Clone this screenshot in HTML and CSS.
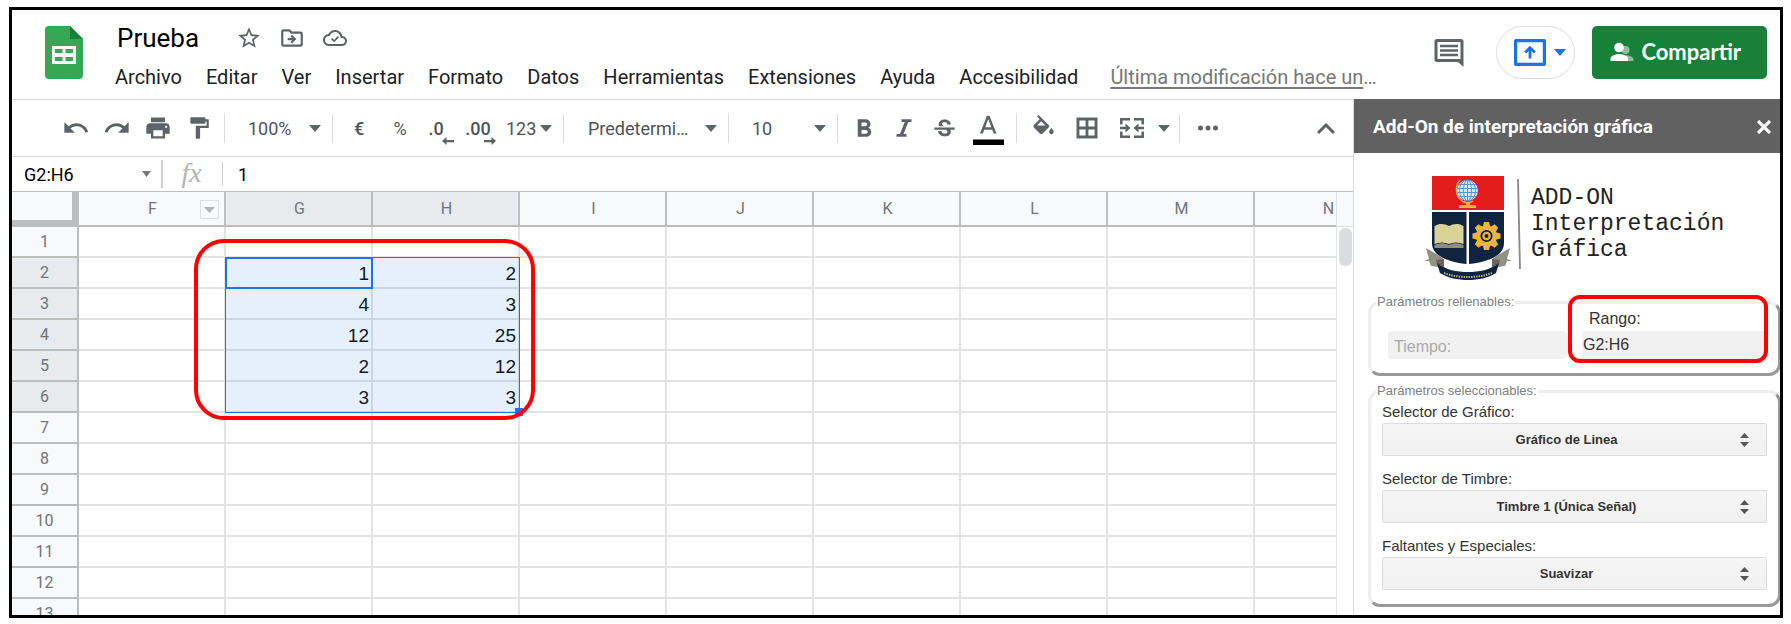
FILE: index.html
```html
<!DOCTYPE html>
<html lang="es">
<head>
<meta charset="utf-8">
<title>Prueba</title>
<link rel="stylesheet" href="styles.css">
</head>
<body>
<div class="frame">
  <header class="header">
    <svg class="logo" width="38" height="53" viewBox="0 0 38 53" aria-hidden="true">
      <path fill="#34a853" d="M4 0h21l13 13v36a4 4 0 0 1-4 4H4a4 4 0 0 1-4-4V4a4 4 0 0 1 4-4z"/>
      <path fill="#188038" d="M25 0l13 13H25z"/>
      <path fill="#fff" fill-rule="evenodd" d="M7 20h24v18H7zM10 23v4h7.500v-4zM20.500 23v4H28v-4zM10 31v4h7.500v-4zM20.500 31v4H28v-4z"/>
    </svg>
    <div class="heading">
      <div class="title-row">
        <h1 class="title">Prueba</h1>
        <button class="title-btn" aria-label="Destacar"><svg width="26" height="26" viewBox="0 0 24 24"><path d="M22 9.24l-7.19-.62L12 2 9.19 8.63 2 9.24l5.46 4.73L5.82 21 12 17.27 18.18 21l-1.63-7.03L22 9.24zM12 15.4l-3.76 2.27 1-4.28-3.32-2.88 4.38-.38L12 6.1l1.710 4.040 4.380.380-3.320 2.880 1 4.280L12 15.400z"/></svg></button>
        <button class="title-btn" aria-label="Mover"><svg width="26" height="26" viewBox="0 0 24 24"><path d="M20 6h-8l-2-2H4c-1.100 0-2 .9-2 2v12c0 1.100.9 2 2 2h16c1.100 0 2-.9 2-2V8c0-1.100-.9-2-2-2zm0 12H4V6h5.170l2 2H20v10z"/><path d="M12.160 12H8v2h4.160l-1.590 1.590L11.990 17 16 13.010 11.990 9l-1.410 1.410z"/></svg></button>
        <button class="title-btn" aria-label="Estado del documento"><svg width="24" height="24" viewBox="0 0 24 24"><path d="M19.35 10.04C18.67 6.59 15.64 4 12 4 9.11 4 6.61 5.64 5.36 8.04 2.34 8.36 0 10.91 0 14c0 3.31 2.69 6 6 6h13c2.76 0 5-2.24 5-5 0-2.64-2.05-4.78-4.65-4.96zM19 18H6c-2.21 0-4-1.79-4-4 0-2.05 1.53-3.76 3.56-3.97l1.07-.11.5-.95C8.08 7.14 9.94 6 12 6c2.62 0 4.88 1.86 5.39 4.43l.3 1.5 1.53.11c1.56.1 2.78 1.41 2.78 2.960 0 1.650-1.350 3-3 3z"/><path d="M8.600 12.600l2.500 2.500 4.400-4.400" fill="none" stroke="#5f6368" stroke-width="1.700"/></svg></button>
      </div>
      <nav class="menu">
        <button>Archivo</button><button>Editar</button><button>Ver</button><button>Insertar</button><button>Formato</button><button>Datos</button><button>Herramientas</button><button>Extensiones</button><button>Ayuda</button><button>Accesibilidad</button>
        <span class="modified"><a href="#">Última modificación hace un</a>…</span>
      </nav>
    </div>
    <div class="actions">
      <button class="comment" aria-label="Comentarios"><svg width="30" height="30" viewBox="0 0 30 30"><path fill="#5f6368" fill-rule="evenodd" d="M3 1h24a2.500 2.500 0 0 1 2.500 2.500V29l-5.500-5H3a2.500 2.500 0 0 1-2.500-2.500v-18A2.500 2.500 0 0 1 3 1zm.5 3v17h23V4z"/><path stroke="#5f6368" stroke-width="2.400" d="M6 8h18M6 12.500h18M6 17h18"/></svg></button>
      <button class="present" aria-label="Presentar"><svg width="32" height="27" viewBox="0 0 32 27"><rect x="1.500" y="1.500" width="29" height="24" rx="1.500" fill="none" stroke="#1a73e8" stroke-width="3.400"/><path d="M16 19.500V9.500M11.200 13.500L16 8.700l4.800 4.800" fill="none" stroke="#1a73e8" stroke-width="2.800"/></svg><svg width="12" height="7" viewBox="0 0 12 7"><path fill="#1a73e8" d="M0 0h12L6 7z"/></svg></button>
      <button class="share"><svg width="24" height="20" viewBox="0 0 24 20"><g fill="#8cc09c"><circle cx="15.500" cy="8" r="4"/><path d="M16 13c3 .5 7.500 1.800 7.500 4.500V19H17z"/></g><g fill="#fff"><circle cx="9" cy="5.500" r="4.800"/><path d="M.5 19v-2.500C.5 13.500 6 12 9.200 12S18 13.500 18 16.500V19z"/></g></svg>Compartir</button>
    </div>
  </header>

  <div class="workspace">
    <main class="sheet">
      <div class="toolbar">
        <button class="tool" aria-label="Deshacer"><svg width="28" height="28" viewBox="0 0 24 24"><path d="M12.5 8c-2.65 0-5.05.99-6.9 2.6L2 7v9h9l-3.62-3.62c1.39-1.16 3.16-1.88 5.12-1.88 3.54 0 6.55 2.31 7.6 5.5l2.37-.78C21.08 11.03 17.15 8 12.5 8z"/></svg></button>
        <button class="tool" aria-label="Rehacer"><svg width="28" height="28" viewBox="0 0 24 24"><path d="M18.4 10.6C16.55 8.99 14.15 8 11.5 8c-4.65 0-8.58 3.03-9.96 7.22L3.9 16c1.05-3.19 4.05-5.5 7.6-5.5 1.95 0 3.73.72 5.12 1.88L13 16h9V7l-3.6 3.6z"/></svg></button>
        <button class="tool" aria-label="Imprimir"><svg width="28" height="28" viewBox="0 0 24 24"><path d="M19 8H5c-1.66 0-3 1.34-3 3v6h4v4h12v-4h4v-6c0-1.66-1.34-3-3-3zm-3 11H8v-5h8v5zm3-7c-.55 0-1-.45-1-1s.45-1 1-1 1 .45 1 1-.45 1-1 1zm-1-9H6v4h12V3z"/></svg></button>
        <button class="tool" aria-label="Copiar formato"><svg width="26" height="26" viewBox="0 0 24 24"><path d="M18 4V3c0-.55-.45-1-1-1H5c-.55 0-1 .45-1 1v4c0 .55.45 1 1 1h12c.55 0 1-.45 1-1V6h1v4H9v11c0 .55.45 1 1 1h2c.55 0 1-.45 1-1v-9h8V4h-3z"/></svg></button>
        <span class="sep"></span>
        <span class="drop drop-zoom"><select aria-label="Zoom"><option>100%</option></select><svg class="caret" width="12" height="7" viewBox="0 0 12 7"><path d="M0 0h12L6 7z"/></svg></span>
        <span class="sep"></span>
        <button class="tool text euro">€</button>
        <button class="tool text percent">%</button>
        <button class="tool text decimal dec-less" aria-label="Menos decimales">.0<svg width="12" height="8" viewBox="0 0 12 8"><path d="M0 4l4.500-4v3H12v2.200H4.500V8z"/></svg></button>
        <button class="tool text decimal dec-more" aria-label="Más decimales">.00<svg width="12" height="8" viewBox="0 0 12 8"><path d="M12 4L7.500 0v3H0v2.200h7.500V8z"/></svg></button>
        <span class="drop drop-format"><select aria-label="Formato de número"><option>123</option></select><svg class="caret" width="12" height="7" viewBox="0 0 12 7"><path d="M0 0h12L6 7z"/></svg></span>
        <span class="sep"></span>
        <span class="drop drop-font"><select aria-label="Fuente"><option>Predetermi…</option></select><svg class="caret" width="12" height="7" viewBox="0 0 12 7"><path d="M0 0h12L6 7z"/></svg></span>
        <span class="sep"></span>
        <span class="drop drop-size"><select aria-label="Tamaño"><option>10</option></select><svg class="caret" width="12" height="7" viewBox="0 0 12 7"><path d="M0 0h12L6 7z"/></svg></span>
        <span class="sep"></span>
        <button class="tool" aria-label="Negrita"><svg width="30" height="30" viewBox="0 -1 24 24"><path d="M15.6 10.79c.97-.67 1.65-1.77 1.65-2.79 0-2.26-1.75-4-4-4H7v14h7.04c2.09 0 3.71-1.7 3.71-3.79 0-1.52-.86-2.82-2.15-3.42zM10 6.5h3c.83 0 1.5.67 1.5 1.5s-.67 1.5-1.5 1.5h-3v-3zm3.5 9H10v-3h3.5c.83 0 1.5.67 1.5 1.5s-.67 1.5-1.5 1.5z"/></svg></button>
        <button class="tool narrow" aria-label="Cursiva"><svg width="30" height="30" viewBox="0 -1 24 24"><path d="M10 4v2.200h2.600L8.700 15.800H6V18h8v-2.200h-2.400l3.900-9.600H18V4z"/></svg></button>
        <button class="tool" aria-label="Tachado"><svg width="27" height="27" viewBox="0 -1 24 24"><path d="M7.24 8.75c-.26-.48-.39-1.03-.39-1.67 0-.61.13-1.16.4-1.67.26-.5.63-.93 1.11-1.29.48-.35 1.05-.63 1.7-.83.66-.19 1.39-.29 2.18-.29.81 0 1.54.11 2.21.34.66.22 1.23.54 1.69.94.47.4.83.88 1.08 1.43s.38 1.15.38 1.81h-3.01c0-.31-.05-.59-.15-.85-.09-.27-.24-.49-.44-.68-.2-.19-.45-.33-.75-.44-.3-.1-.66-.16-1.06-.16-.39 0-.74.04-1.03.13s-.53.21-.72.36c-.19.16-.34.34-.44.55-.1.21-.15.43-.15.66 0 .48.25.88.74 1.21.38.25.77.48 1.41.7H7.39c-.05-.08-.11-.17-.15-.25zM21 12v-2H3v2h9.62c.18.07.4.14.55.2.37.17.66.34.87.51s.35.36.43.57c.07.2.11.43.11.69 0 .23-.05.45-.14.66-.09.2-.23.38-.42.53-.19.15-.42.26-.71.35-.29.08-.63.13-1.01.13-.43 0-.83-.04-1.18-.13s-.66-.23-.91-.42c-.25-.19-.45-.44-.59-.75s-.25-.76-.25-1.21H6.4c0 .55.08 1.13.24 1.58s.37.85.65 1.21c.28.35.6.66.98.92.37.26.78.48 1.22.65.44.17.9.3 1.38.39.48.08.96.13 1.44.13.8 0 1.53-.09 2.18-.28s1.21-.45 1.67-.79c.46-.34.82-.77 1.07-1.27s.38-1.07.38-1.71c0-.6-.1-1.14-.31-1.61-.05-.11-.11-.23-.17-.33H21z"/></svg></button>
        <button class="tool wide" aria-label="Color del texto"><svg width="31" height="34" viewBox="0 0 31 34"><path transform="translate(0 1) scale(1.270)" d="M11 3L5.500 17h2.250l1.120-3h6.250l1.120 3h2.250L13 3h-2zm-1.380 9L12 5.670 14.380 12H9.620z"/><path fill="#000" d="M0 28.500h31v5.500H0z"/></svg></button>
        <span class="sep"></span>
        <button class="tool" aria-label="Color de relleno"><svg width="27" height="27" viewBox="0 0 24 24"><path d="M16.56 8.94L7.62 0 6.21 1.41l2.38 2.38-5.15 5.15c-.59.59-.59 1.54 0 2.12l5.5 5.5c.29.29.68.44 1.06.44s.77-.15 1.06-.44l5.5-5.5c.59-.58.59-1.53 0-2.12z"/><path fill="#fff" d="M6.200 9.300L10 5.500l3.800 3.800z"/><path d="M19 11.500s-2 2.170-2 3.500c0 1.100.9 2 2 2s2-.9 2-2c0-1.330-2-3.500-2-3.500z"/></svg></button>
        <button class="tool wide" aria-label="Bordes"><svg width="28" height="28" viewBox="0 0 24 24"><path fill-rule="evenodd" d="M3 3v18h18V3H3zm7.800 15.500H5.500v-5.300h5.300zM10.800 10.800H5.500V5.500h5.300zM18.500 18.500h-5.300v-5.300h5.300zM18.500 10.800h-5.300V5.500h5.300z"/></svg></button>
        <button class="tool merge" aria-label="Combinar celdas"><svg width="24" height="22" viewBox="0 0 24 22"><path fill="none" stroke="#5f6368" stroke-width="2.500" d="M10 2.200H1.300V7.500M14 2.200h8.700V7.500M10 19.800H1.300V14.500M14 19.800h8.700V14.500M0 11h7M24 11h-7"/><path d="M5.500 6.500L10.500 11l-5 4.500zM18.500 6.500L13.500 11l5 4.500z"/></svg></button>
        <button class="tool slim" aria-label="Tipo de combinación"><svg width="12" height="7" viewBox="0 0 12 7"><path d="M0 0h12L6 7z"/></svg></button>
        <span class="sep"></span>
        <button class="tool more" aria-label="Más"><svg width="20" height="6" viewBox="0 0 20 6"><circle cx="2.500" cy="3" r="2.500"/><circle cx="10" cy="3" r="2.500"/><circle cx="17.500" cy="3" r="2.500"/></svg></button>
        <button class="tool collapse" aria-label="Ocultar los menús"><svg width="18" height="11" viewBox="0 0 18 11"><path fill="none" stroke="#5f6368" stroke-width="3" d="M1 10l8-8 8 8"/></svg></button>
      </div>

      <div class="formula-bar">
        <input class="name-box" aria-label="Cuadro de nombres" value="G2:H6">
        <svg width="9" height="6" viewBox="0 0 9 6"><path fill="#777" d="M0 0h9L4.500 6z"/></svg>
        <span class="bar-sep tall"></span>
        <label class="fx" for="formula">fx</label>
        <span class="bar-sep"></span>
        <input class="formula" id="formula" value="1">
      </div>

      <div class="grid-area">
        <div class="grid-view">
          <table class="grid" id="grid">
            <thead><tr>
              <th class="corner"></th>
              <th>F<button class="col-menu" aria-label="Menú de la columna F"><svg width="11" height="6" viewBox="0 0 11 6"><path fill="#b4b4b4" d="M0 0h11L5.500 6z"/></svg></button></th>
              <th class="on">G</th><th class="on">H</th><th>I</th><th>J</th><th>K</th><th>L</th><th>M</th><th>N</th>
            </tr></thead>
            <tbody></tbody>
          </table>
          <div class="selection"><span class="active-cell"></span><span class="handle"></span></div>
          <div class="mark mark-cells"></div>
        </div>
        <div class="scroll"><div class="scroll-head"></div><div class="thumb"></div></div>
      </div>
    </main>

    <aside class="addon">
      <div class="addon-head">
        <h2>Add-On de interpretación gráfica</h2>
        <button aria-label="Cerrar"><svg width="14" height="14" viewBox="0 0 14 14"><path stroke="#fff" stroke-width="3.200" d="M1 1l12 12M13 1L1 13"/></svg></button>
      </div>
      <div class="brand">
        <svg class="shield" width="88" height="106" viewBox="0 0 88 106" aria-hidden="true">
          <path fill="#e21d1b" d="M8 1h72v34H8z"/>
          <circle cx="43.500" cy="15.500" r="10.500" fill="#d9e8f7"/>
          <g fill="none" stroke="#5d93cf" stroke-width="1"><path d="M35 9.500h17M33 13.500h21M33 17.500h21M35 21.500h17M43.500 5v21"/><ellipse cx="43.500" cy="15.500" rx="4" ry="10.500"/><ellipse cx="43.500" cy="15.500" rx="8" ry="10.500"/></g>
          <path fill="none" stroke="#edb33c" stroke-width="1.500" d="M36 5c-5 5-5 16 2 21 4 2.500 8 2 11 0"/>
          <path fill="#edb33c" d="M42 27h4v3h6v3H35v-3h7z"/>
          <path fill="#10233f" d="M8 37h34.500v52C24 87 8 81 8 68zM45 37h35v31c0 13-16 19-35 21z"/>
          <path fill="#d9d398" d="M10.500 51c5-3 10-2.500 14.500 0 4.500-2.500 10-3 14.500 0v18c-5-2-10-2-14.500 0-4.500-2-9.500-2-14.500 0z"/>
          <path fill="#928a83" d="M10.500 70c5-2.500 10-2.500 14.500 0 4.500-2.500 9.500-2.500 14.500 0v3h-29z"/>
          <g transform="translate(62.500 61)"><g fill="#edb33c"><circle r="10.500"/><path id="tooth" d="M-2.500-14h5L4-8h-8z"/><use href="#tooth" transform="rotate(45)"/><use href="#tooth" transform="rotate(90)"/><use href="#tooth" transform="rotate(135)"/><use href="#tooth" transform="rotate(180)"/><use href="#tooth" transform="rotate(225)"/><use href="#tooth" transform="rotate(270)"/><use href="#tooth" transform="rotate(315)"/></g><circle r="5.200" fill="none" stroke="#10233f" stroke-width="1.800"/><circle r="2" fill="#10233f"/></g>
          <path fill="#8f9182" d="M2 73l17 10v15l-5-6-7-1-2-5H0l5-2zM86 73l-17 10v15l5-6 7-1 2-5h5l-5-2z"/>
          <path fill="#72605b" d="M12 85l8-1v8l-7-3zM76 85l-8-1v8l7-3z"/>
          <path fill="#10233f" d="M13 88c9 7 20 9 31 9s22-2 31-9l-3 10c-8 5-18 7-28 7s-20-2-28-7z"/>
          <path fill="none" stroke="#b4b389" stroke-width="2" stroke-dasharray="1.500 1" d="M20 98c8 3 16 4 24 4s16-1 24-4"/>
        </svg>
        <svg class="rule" width="4" height="90" viewBox="0 0 4 90" aria-hidden="true"><path stroke="#888" stroke-width="1.800" d="M1 0l2 90"/></svg>
        <p>ADD-ON<br>Interpretación<br>Gráfica</p>
      </div>

      <fieldset class="group fill">
        <legend>Parámetros rellenables:</legend>
        <input class="field" aria-label="Tiempo" placeholder="Tiempo:">
        <div class="range"><label for="range">Rango:</label><input class="field" id="range" value="G2:H6"></div>
        <div class="mark mark-range"></div>
      </fieldset>

      <fieldset class="group choose">
        <legend>Parámetros seleccionables:</legend>
        <label for="chart">Selector de Gráfico:</label>
        <span class="picker"><select id="chart"><option>Gráfico de Linea</option></select><svg width="9" height="14" viewBox="0 0 9 14"><path d="M4.500 0L9 5H0zM0 9h9l-4.500 5z"/></svg></span>
        <label for="tone">Selector de Timbre:</label>
        <span class="picker"><select id="tone"><option>Timbre 1 (Única Señal)</option></select><svg width="9" height="14" viewBox="0 0 9 14"><path d="M4.500 0L9 5H0zM0 9h9l-4.500 5z"/></svg></span>
        <label for="missing">Faltantes y Especiales:</label>
        <span class="picker"><select id="missing"><option>Suavizar</option></select><svg width="9" height="14" viewBox="0 0 9 14"><path d="M4.500 0L9 5H0zM0 9h9l-4.500 5z"/></svg></span>
      </fieldset>
    </aside>
  </div>
</div>
<script src="grid.js"></script>
</body>
</html>
```

FILE: styles.css
```css
* { box-sizing: border-box; }

body {
  margin: 0;
  padding: 7px 8px 6px 9px;
  height: 100vh;
  background: #fff;
  font-family: Roboto, "Liberation Sans", sans-serif;
  color: #202124;
}

button, input, select { font: inherit; color: inherit; }
button { border: 0; padding: 0; background: none; cursor: pointer; }
select { appearance: none; border: 0; background: none; padding: 0; margin: 0; outline: 0; }
input { border: 0; outline: 0; padding: 0; background: none; min-width: 0; }
svg { display: block; fill: #5f6368; flex: none; }

.frame {
  height: 100%;
  border: 3px solid #000;
  overflow: hidden;
  display: flex;
  flex-direction: column;
}

/* Header */
.header {
  flex: none;
  display: flex;
  align-items: flex-start;
  height: 89px;
  padding: 16px 13px 0 33px;
}
.heading { flex: 1; min-width: 0; margin-left: 32px; }
.title-row { display: flex; align-items: center; height: 24px; padding-left: 2px; }
.title { margin: 0 28px 0 0; font-size: 26px; line-height: 24px; font-weight: 400; color: #000; }
.title-btn { width: 43px; display: grid; place-items: center; }
.menu { display: flex; align-items: center; gap: 24px; margin-top: 14px; font-size: 20px; line-height: 26px; white-space: nowrap; }
.modified { margin-left: 8px; color: #777; }
.modified a { color: inherit; text-underline-offset: 3px; }
.actions { display: flex; align-items: center; }
.comment { margin-right: 32px; }
.present {
  display: flex; align-items: center; gap: 8px;
  height: 53px; padding: 0 8px 0 17px; margin-right: 17px;
  border: 1px solid #dadce0; border-radius: 27px;
}
.share {
  display: flex; align-items: center; gap: 7px;
  height: 53px; padding: 0 26px 2px 18px;
  border-radius: 5px; background: #188038; color: #fff;
  font: 700 22px/24px Lato, sans-serif;
}

.workspace { flex: 1; min-height: 0; display: flex; }
.sheet { flex: 1; min-width: 0; display: flex; flex-direction: column; border-top: 1px solid #dadce0; }

/* Toolbar */
.toolbar {
  flex: none;
  display: flex; align-items: center;
  height: 57px; padding: 0 14px 0 43px;
  border-bottom: 1px solid #dadce0;
  font-size: 18px; color: #4f5358;
}
.tool { width: 42px; height: 40px; display: grid; place-items: center; flex: none; }
.tool.narrow { width: 38px; }
.tool.wide { width: 46px; }
.tool.merge { width: 44px; }
.tool.slim { width: 20px; }
.tool:nth-child(-n+4) { width: 41px; }
.tool.text { font-weight: 500; }
.tool.percent { width: 40px; font-weight: 400; }
.tool.dec-less { width: 32px; }
.tool.dec-more { width: 52px; }
.sep { width: 1px; height: 29px; margin: 0 5px; background: #dadce0; flex: none; }
.decimal { position: relative; }
.decimal svg { position: absolute; right: -2px; bottom: 3px; }
.dec-more svg { right: 8px; }
.drop { position: relative; flex: none; }
.drop select { width: 100%; height: 40px; padding-left: 18px; }
.drop .caret { position: absolute; right: 6px; top: 17px; pointer-events: none; }
.drop-zoom { width: 97px; }
.drop-format { width: 54px; }
.drop-format select { padding-left: 2px; }
.drop-font { width: 154px; }
.drop-font select { padding-left: 19px; }
.drop-size { width: 98px; }
.more { margin-left: 2px; }
.collapse { margin-left: auto; width: 26px; }

/* Formula bar */
.formula-bar { flex: none; display: flex; align-items: center; height: 35px; border-bottom: 1px solid #c0c0c0; font-size: 18px; color: #000; }
.name-box { width: 130px; padding-left: 12px; }
.bar-sep { width: 1px; height: 24px; background: #d0d0d0; }
.bar-sep.tall { width: 2px; height: 28px; margin-left: 10px; }
.fx { width: 59px; padding: 0 2px 3px 0; text-align: center; font: italic 28px/30px "Liberation Serif", serif; color: #b4b4b4; }
.formula { flex: 1; padding-left: 15px; }

/* Cells */
.grid-area { flex: 1; min-height: 0; display: flex; overflow: hidden; }
.grid-view { flex: 1; min-width: 0; position: relative; overflow: hidden; }
.grid { width: 1390px; table-layout: fixed; border-collapse: separate; border-spacing: 0; }
.grid th, .grid td { padding: 0; border: solid #e2e3e3; border-width: 0 2px 2px 0; height: 31px; }
.grid th { background: #f8f9fa; border-color: #bdbdbd; font-size: 16px; line-height: 20px; font-weight: 400; color: #70757a; }
.grid th.on { background: #e8eaed; }
.grid thead th { height: 35px; position: relative; padding-left: 2px; }
.grid .corner { width: 67px; border-width: 0 7px 7px 0; }
.grid td { padding: 2px 2px 0 0; font: 19px/22px "Liberation Sans", Arial, sans-serif; color: #111; text-align: right; }
.col-menu {
  position: absolute; right: 5px; top: 8px;
  width: 19px; height: 19px; display: grid; place-items: center;
  border: 1px solid #dedede;
}
.selection {
  position: absolute; left: 213px; top: 65px; width: 295px; height: 156px;
  border: 1px solid #1a73e8; background: rgba(14, 110, 235, .1);
}
.active-cell { position: absolute; left: -1px; top: -1px; width: 148px; height: 32px; border: 2px solid #1a73e8; }
.handle { position: absolute; right: -4px; bottom: -4px; width: 8px; height: 8px; background: #1a73e8; }
.mark { position: absolute; border: 4px solid #f00; pointer-events: none; }
.mark-cells { left: 182px; top: 47px; width: 341px; height: 181px; border-radius: 30px; }
.scroll { width: 17px; border-left: 1px solid #e2e3e3; }
.scroll-head { height: 35px; background: #f8f9fa; border-bottom: 1px solid #dadce0; }
.thumb { width: 13px; height: 38px; margin: 1px auto 0; border-radius: 6px; background: #dadce0; }

/* Add-on panel */
.addon { flex: none; width: 427px; border-left: 1px solid #dadce0; font: 15px/20px "Liberation Sans", Arial, sans-serif; color: #333; overflow: hidden; }
.addon-head { display: flex; align-items: center; justify-content: space-between; height: 54px; padding: 2px 9px 0 19px; background: #616161; }
.addon-head h2 { margin: 0; font: 700 19px/24px Roboto, sans-serif; color: #fff; }
.brand { display: flex; align-items: flex-start; height: 134px; padding: 22px 0 0 70px; }
.rule { margin: 4px 10px 0 5px; }
.brand p { margin: 10px 0 0; font: 23px/26px "Liberation Mono", monospace; color: #222; }
.group {
  position: relative;
  margin: 7px -1px 0 14px;
  border: 3px solid; border-color: #eee #999 #999 #eee;
  border-radius: 12px;
}
.group legend { padding: 0 1px; font-size: 13px; line-height: 16px; color: #808080; }
.fill {
  display: grid; grid-template-columns: 179px 1fr; column-gap: 15px;
  align-items: end; align-content: start;
  height: 82px; padding: 0 13px 0 17px;
}
.fill legend { margin-left: -12px; }
.field { width: 100%; height: 28px; border-radius: 4px; background: #f1f1f1; font-size: 16px; color: #333; }
.fill > .field { padding: 3px 0 0 6px; }
.field::placeholder { color: #aaa; }
.range label { display: block; padding: 0 0 3px 7px; font-size: 16px; line-height: 18px; }
.range .field { display: block; padding: 0 0 1px 1px; }
.mark-range { left: 197px; right: 10px; top: -15px; height: 68px; border-radius: 12px; }
.choose { display: flex; flex-direction: column; padding: 2px 11px 14px; }
.choose legend { margin-left: -6px; }
.choose label { line-height: 22px; }
.picker { position: relative; margin-bottom: 12px; }
.picker:last-child { margin-bottom: 0; }
.picker select {
  width: 100%; height: 33px; padding-right: 16px;
  border: 1px solid #dcdcdc; border-radius: 2px;
  background: linear-gradient(#f5f5f5, #f1f1f1);
  font-weight: 700; font-size: 13px; text-align: center; text-align-last: center;
}
.picker svg { position: absolute; right: 18px; top: 10px; pointer-events: none; fill: #555; }
```

FILE: grid.js
```js
const values = { 2: [1, 2], 3: [4, 3], 4: [12, 25], 5: [2, 12], 6: [3, 3] };
const body = document.querySelector('#grid tbody');

for (let n = 1; n <= 13; n++) {
  const row = body.insertRow();
  const head = document.createElement('th');
  head.scope = 'row';
  head.textContent = n;
  if (values[n]) head.className = 'on';
  row.append(head);
  for (let c = 0; c < 9; c++) {
    const value = values[n] && values[n][c - 1];
    row.insertCell().textContent = value === undefined ? '' : value;
  }
}
```
